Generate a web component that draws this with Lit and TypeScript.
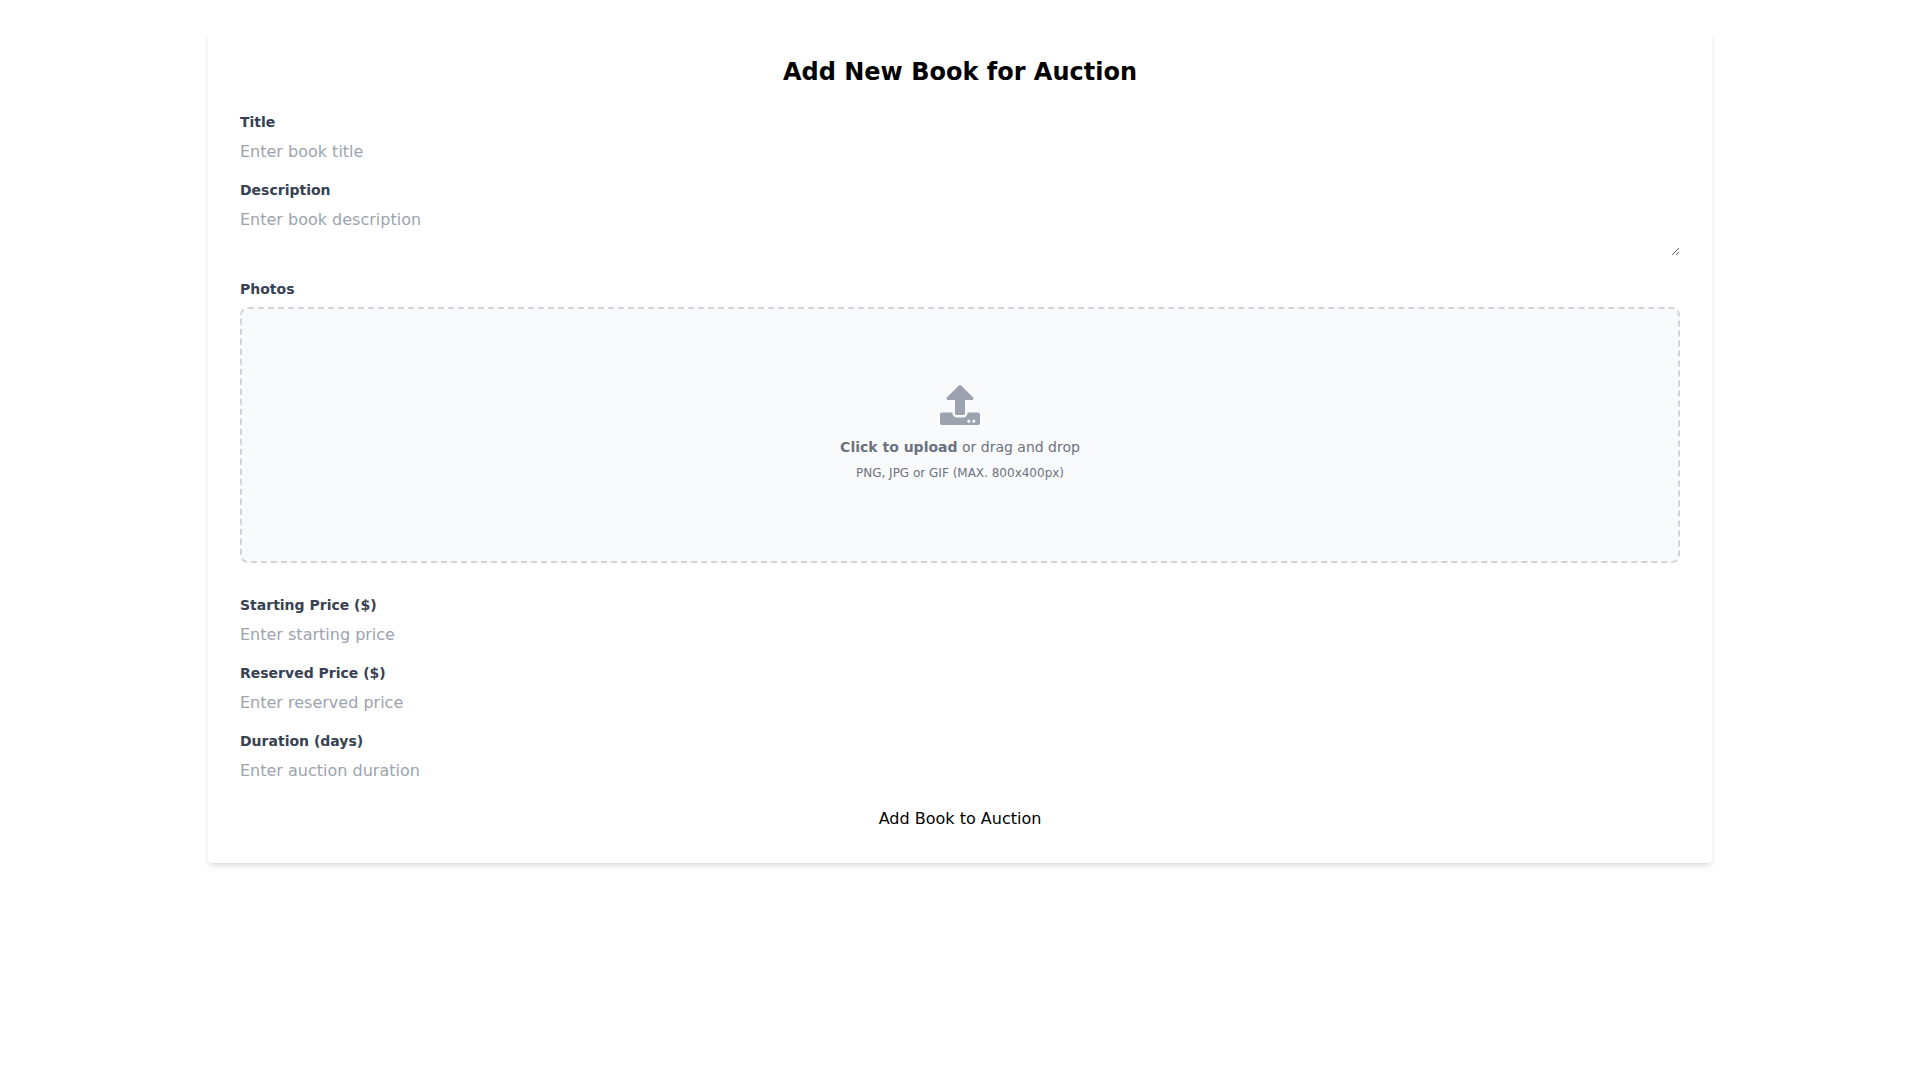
import { LitElement, html, css } from "lit";
import { customElement, property, state } from "lit/decorators.js";

const controlStyles = css`
  *,
  *::before,
  *::after {
    box-sizing: border-box;
  }

  .label {
    display: block;
    margin-bottom: 8px;
    color: #374151;
    font-size: 14px;
    line-height: 20px;
    font-weight: 700;
  }
`;

@customElement("form-field")
export class FormField extends LitElement {
  @property() label = "";
  @property() placeholder = "";
  @property() type = "text";
  @property() name = "";
  @property({ type: Boolean }) multiline = false;

  static styles = [
    controlStyles,
    css`
      :host {
        display: block;
      }

      .control {
        width: 100%;
        margin: 0;
        padding: 0;
        border: 0;
        background: transparent;
        color: inherit;
        font-family: inherit;
        font-size: 16px;
        line-height: 24px;
      }

      .line {
        display: block;
        height: 24px;
      }

      .area {
        resize: vertical;
      }

      .control::placeholder {
        color: #9ca3af;
        opacity: 1;
      }
    `,
  ];

  render() {
    return html`
      <label class="label" for="control">${this.label}</label>
      ${this.multiline
        ? html`<textarea
            class="control area"
            id="control"
            rows="2"
            name=${this.name}
            placeholder=${this.placeholder}
          ></textarea>`
        : html`<input
            class="control line"
            id="control"
            type=${this.type}
            name=${this.name}
            placeholder=${this.placeholder}
          />`}
    `;
  }
}

@customElement("photo-upload")
export class PhotoUpload extends LitElement {
  @state() private files: string[] = [];

  static styles = [
    controlStyles,
    css`
      :host {
        display: block;
      }

      .dropzone {
        display: flex;
        flex-direction: column;
        align-items: center;
        justify-content: center;
        width: 100%;
        height: 256px;
        border: 2px dashed #d1d5db;
        border-radius: 8px;
        background: #f9fafb;
        color: #6b7280;
        cursor: pointer;
      }

      .dropzone:hover {
        background: #f3f4f6;
      }

      .prompt {
        display: flex;
        flex-direction: column;
        align-items: center;
        padding: 20px 0 24px;
        text-align: center;
      }

      .icon {
        display: block;
        width: 40px;
        height: 40px;
        margin-bottom: 12px;
        color: #9ca3af;
      }

      .action {
        margin: 0 0 8px;
        font-size: 14px;
        line-height: 20px;
      }

      .strong {
        font-weight: 600;
      }

      .hint {
        margin: 0;
        font-size: 12px;
        line-height: 16px;
      }

      .file {
        width: 0;
        height: 0;
        padding: 0;
        border: 0;
        opacity: 0;
      }
    `,
  ];

  private onChange(event: Event) {
    const input = event.target as HTMLInputElement;
    this.files = Array.from(input.files ?? []).map((file) => file.name);
  }

  render() {
    return html`
      <label class="label" for="photos">Photos</label>
      <label class="dropzone" for="photos">
        <span class="prompt">
          <svg class="icon" viewBox="0 0 512 512" fill="currentColor" aria-hidden="true">
            <path
              d="M296 384h-80c-13.3 0-24-10.7-24-24V192h-87.7c-17.8 0-26.7-21.5-14.1-34.1L242.3 5.7c7.5-7.5 19.8-7.5 27.3 0l152.2 152.2c12.6 12.6 3.7 34.1-14.1 34.1H320v168c0 13.3-10.7 24-24 24zm216-8v112c0 13.3-10.7 24-24 24H24c-13.3 0-24-10.7-24-24V376c0-13.3 10.7-24 24-24h136v8c0 30.9 25.1 56 56 56h80c30.9 0 56-25.1 56-56v-8h136c13.3 0 24 10.7 24 24zm-124 88c0-11-9-20-20-20s-20 9-20 20 9 20 20 20 20-9 20-20zm64 0c0-11-9-20-20-20s-20 9-20 20 9 20 20 20 20-9 20-20z"
            />
          </svg>
          <span class="action"><span class="strong">Click to upload</span> or drag and drop</span>
          <span class="hint">
            ${this.files.length ? this.files.join(", ") : "PNG, JPG or GIF (MAX. 800x400px)"}
          </span>
        </span>
        <input
          class="file"
          id="photos"
          type="file"
          name="photos"
          accept="image/*"
          multiple
          @change=${this.onChange}
        />
      </label>
    `;
  }
}

@customElement("app-root")
export class AppRoot extends LitElement {
  static styles = css`
    *,
    *::before,
    *::after {
      box-sizing: border-box;
    }

    :host {
      display: block;
      color: #000;
      font-family: "DejaVu Sans", sans-serif;
      font-size: 16px;
      line-height: 24px;
    }

    .page {
      max-width: 1536px;
      margin: 0 auto;
      padding: 32px 16px;
    }

    .card {
      padding: 24px 32px 32px;
      border-radius: 4px;
      background: #fff;
      box-shadow:
        0 4px 6px -1px rgb(0 0 0 / 0.1),
        0 2px 4px -2px rgb(0 0 0 / 0.1);
    }

    .heading {
      margin: 0 0 24px;
      font-size: 24px;
      line-height: 32px;
      font-weight: 700;
      text-align: center;
    }

    .fields {
      display: flex;
      flex-direction: column;
      gap: 16px;
    }

    .photos {
      margin-bottom: 16px;
    }

    .submit {
      display: block;
      width: 100%;
      margin: 24px 0 0;
      padding: 0;
      border: 0;
      background: transparent;
      color: inherit;
      font-family: inherit;
      font-size: 16px;
      line-height: 24px;
      cursor: pointer;
    }
  `;

  private onSubmit(event: Event) {
    event.preventDefault();
  }

  render() {
    return html`
      <main class="page">
        <form class="card" @submit=${this.onSubmit}>
          <h1 class="heading">Add New Book for Auction</h1>
          <div class="fields">
            <form-field label="Title" name="title" placeholder="Enter book title"></form-field>
            <form-field
              label="Description"
              name="description"
              placeholder="Enter book description"
              multiline
            ></form-field>
            <photo-upload class="photos"></photo-upload>
            <form-field
              label="Starting Price ($)"
              name="startingPrice"
              type="number"
              placeholder="Enter starting price"
            ></form-field>
            <form-field
              label="Reserved Price ($)"
              name="reservedPrice"
              type="number"
              placeholder="Enter reserved price"
            ></form-field>
            <form-field
              label="Duration (days)"
              name="duration"
              type="number"
              placeholder="Enter auction duration"
            ></form-field>
          </div>
          <button class="submit" type="submit">Add Book to Auction</button>
        </form>
      </main>
    `;
  }
}
